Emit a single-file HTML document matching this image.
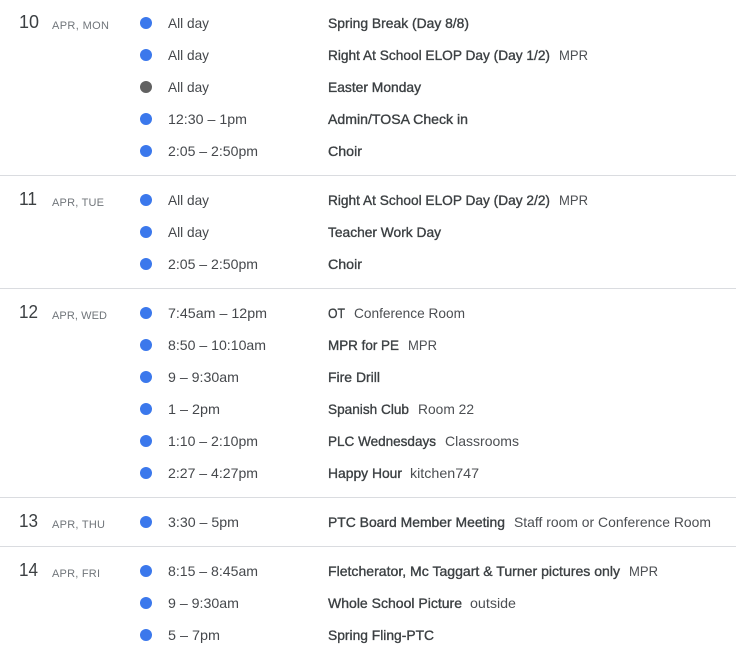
<!DOCTYPE html>
<html lang="en"><head><meta charset="utf-8"><title>Agenda</title>
<style>
html,body{margin:0;padding:0;background:#fff;width:736px;height:655px;overflow:hidden}
svg{display:block}
text{font-family:"Liberation Sans",Arial,sans-serif;font-size:14px;fill:#3c4043}
.t{fill:#45484c}
.b{stroke:#3c4043;stroke-width:.35px}
.l{fill:#4c4f53}
.d{font-size:18px;fill:#3c4043}
.m{font-size:11px;fill:#70757a}
circle{fill:#3b78ec}
rect{fill:#dadce0}
</style></head><body>
<svg width="736" height="655" viewBox="0 0 736 655" xmlns="http://www.w3.org/2000/svg">
<rect x="0" y="175" width="736" height="1"/><rect x="0" y="288" width="736" height="1"/><rect x="0" y="497" width="736" height="1"/><rect x="0" y="546" width="736" height="1"/>

<text class="d" x="19" y="28" textLength="20" lengthAdjust="spacingAndGlyphs">10</text>
<text class="m" x="52" y="29" textLength="57" lengthAdjust="spacing">APR, MON</text>
<text class="d" x="19" y="205" textLength="18" lengthAdjust="spacingAndGlyphs">11</text>
<text class="m" x="52" y="206" textLength="52" lengthAdjust="spacing">APR, TUE</text>
<text class="d" x="19" y="318" textLength="19" lengthAdjust="spacingAndGlyphs">12</text>
<text class="m" x="52" y="319" textLength="55" lengthAdjust="spacing">APR, WED</text>
<text class="d" x="19" y="527" textLength="19" lengthAdjust="spacingAndGlyphs">13</text>
<text class="m" x="52" y="528" textLength="53" lengthAdjust="spacing">APR, THU</text>
<text class="d" x="19" y="576" textLength="19" lengthAdjust="spacingAndGlyphs">14</text>
<text class="m" x="52" y="577" textLength="48" lengthAdjust="spacing">APR, FRI</text>

<circle cx="146" cy="23" r="6"/><circle cx="146" cy="55" r="6"/><circle cx="146" cy="87" r="6" style="fill:#616161"/><circle cx="146" cy="119" r="6"/><circle cx="146" cy="151" r="6"/>
<circle cx="146" cy="200" r="6"/><circle cx="146" cy="232" r="6"/><circle cx="146" cy="264" r="6"/>
<circle cx="146" cy="313" r="6"/><circle cx="146" cy="345" r="6"/><circle cx="146" cy="377" r="6"/><circle cx="146" cy="409" r="6"/><circle cx="146" cy="441" r="6"/><circle cx="146" cy="473" r="6"/>
<circle cx="146" cy="522" r="6"/>
<circle cx="146" cy="571" r="6"/><circle cx="146" cy="603" r="6"/><circle cx="146" cy="635" r="6"/>

<text class="t" x="168" y="28" textLength="41" lengthAdjust="spacingAndGlyphs">All day</text>
<text class="t" x="168" y="60" textLength="41" lengthAdjust="spacingAndGlyphs">All day</text>
<text class="t" x="168" y="92" textLength="41" lengthAdjust="spacingAndGlyphs">All day</text>
<text class="t" x="168" y="124" textLength="79" lengthAdjust="spacingAndGlyphs">12:30 – 1pm</text>
<text class="t" x="168" y="156" textLength="90" lengthAdjust="spacingAndGlyphs">2:05 – 2:50pm</text>
<text class="t" x="168" y="205" textLength="41" lengthAdjust="spacingAndGlyphs">All day</text>
<text class="t" x="168" y="237" textLength="41" lengthAdjust="spacingAndGlyphs">All day</text>
<text class="t" x="168" y="269" textLength="90" lengthAdjust="spacingAndGlyphs">2:05 – 2:50pm</text>
<text class="t" x="168" y="318" textLength="99" lengthAdjust="spacingAndGlyphs">7:45am – 12pm</text>
<text class="t" x="168" y="350" textLength="98" lengthAdjust="spacingAndGlyphs">8:50 – 10:10am</text>
<text class="t" x="168" y="382" textLength="71" lengthAdjust="spacingAndGlyphs">9 – 9:30am</text>
<text class="t" x="168" y="414" textLength="52" lengthAdjust="spacingAndGlyphs">1 – 2pm</text>
<text class="t" x="168" y="446" textLength="90" lengthAdjust="spacingAndGlyphs">1:10 – 2:10pm</text>
<text class="t" x="168" y="478" textLength="90" lengthAdjust="spacingAndGlyphs">2:27 – 4:27pm</text>
<text class="t" x="168" y="527" textLength="71" lengthAdjust="spacingAndGlyphs">3:30 – 5pm</text>
<text class="t" x="168" y="576" textLength="90" lengthAdjust="spacingAndGlyphs">8:15 – 8:45am</text>
<text class="t" x="168" y="608" textLength="71" lengthAdjust="spacingAndGlyphs">9 – 9:30am</text>
<text class="t" x="168" y="640" textLength="52" lengthAdjust="spacingAndGlyphs">5 – 7pm</text>

<text class="b" x="328" y="28" textLength="141" lengthAdjust="spacingAndGlyphs">Spring Break (Day 8/8)</text>
<text class="b" x="328" y="60" textLength="222" lengthAdjust="spacingAndGlyphs">Right At School ELOP Day (Day 1/2)</text>
<text class="l" x="559" y="60" textLength="29" lengthAdjust="spacingAndGlyphs">MPR</text>
<text class="b" x="328" y="92" textLength="93" lengthAdjust="spacingAndGlyphs">Easter Monday</text>
<text class="b" x="328" y="124" textLength="140" lengthAdjust="spacingAndGlyphs">Admin/TOSA Check in</text>
<text class="b" x="328" y="156" textLength="34" lengthAdjust="spacingAndGlyphs">Choir</text>
<text class="b" x="328" y="205" textLength="222" lengthAdjust="spacingAndGlyphs">Right At School ELOP Day (Day 2/2)</text>
<text class="l" x="559" y="205" textLength="29" lengthAdjust="spacingAndGlyphs">MPR</text>
<text class="b" x="328" y="237" textLength="113" lengthAdjust="spacingAndGlyphs">Teacher Work Day</text>
<text class="b" x="328" y="269" textLength="34" lengthAdjust="spacingAndGlyphs">Choir</text>
<text class="b" x="328" y="318" textLength="17" lengthAdjust="spacingAndGlyphs">OT</text>
<text class="l" x="354" y="318" textLength="111" lengthAdjust="spacingAndGlyphs">Conference Room</text>
<text class="b" x="328" y="350" textLength="71" lengthAdjust="spacingAndGlyphs">MPR for PE</text>
<text class="l" x="408" y="350" textLength="29" lengthAdjust="spacingAndGlyphs">MPR</text>
<text class="b" x="328" y="382" textLength="52" lengthAdjust="spacingAndGlyphs">Fire Drill</text>
<text class="b" x="328" y="414" textLength="81" lengthAdjust="spacingAndGlyphs">Spanish Club</text>
<text class="l" x="418" y="414" textLength="56" lengthAdjust="spacingAndGlyphs">Room 22</text>
<text class="b" x="328" y="446" textLength="108" lengthAdjust="spacingAndGlyphs">PLC Wednesdays</text>
<text class="l" x="445" y="446" textLength="74" lengthAdjust="spacingAndGlyphs">Classrooms</text>
<text class="b" x="328" y="478" textLength="74" lengthAdjust="spacingAndGlyphs">Happy Hour</text>
<text class="l" x="410" y="478" textLength="69" lengthAdjust="spacingAndGlyphs">kitchen747</text>
<text class="b" x="328" y="527" textLength="177" lengthAdjust="spacingAndGlyphs">PTC Board Member Meeting</text>
<text class="l" x="514" y="527" textLength="197" lengthAdjust="spacingAndGlyphs">Staff room or Conference Room</text>
<text class="b" x="328" y="576" textLength="292" lengthAdjust="spacingAndGlyphs">Fletcherator, Mc Taggart &amp; Turner pictures only</text>
<text class="l" x="629" y="576" textLength="29" lengthAdjust="spacingAndGlyphs">MPR</text>
<text class="b" x="328" y="608" textLength="134" lengthAdjust="spacingAndGlyphs">Whole School Picture</text>
<text class="l" x="470" y="608" textLength="46" lengthAdjust="spacingAndGlyphs">outside</text>
<text class="b" x="328" y="640" textLength="106" lengthAdjust="spacingAndGlyphs">Spring Fling-PTC</text>
</svg>
</body></html>
